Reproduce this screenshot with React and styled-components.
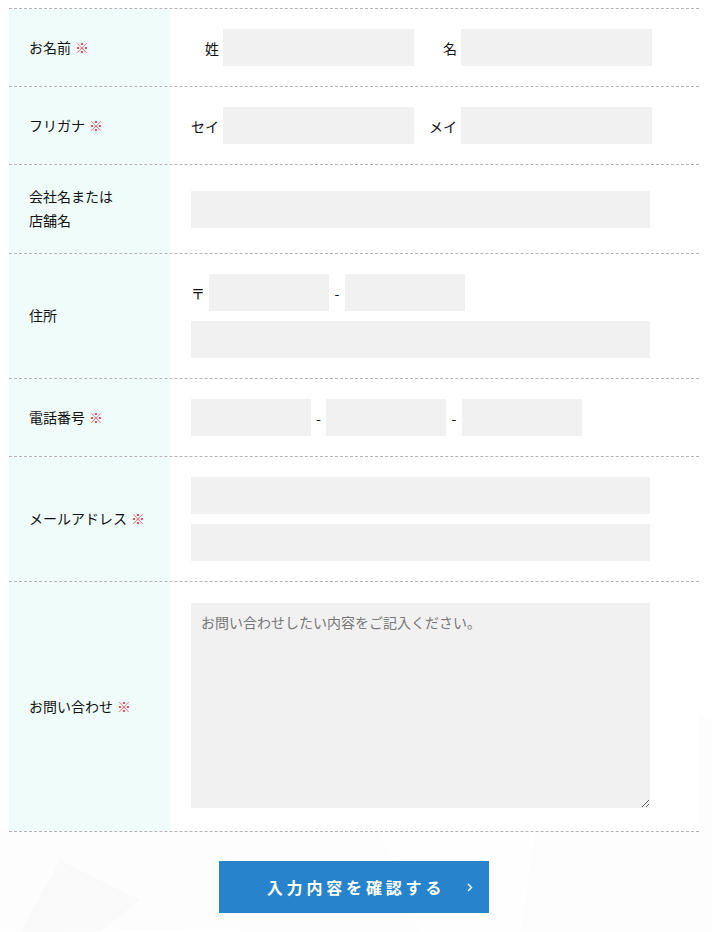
import React from 'react';
import styled, { createGlobalStyle } from 'styled-components';

const GlobalStyle = createGlobalStyle`
    body {
        margin: 0;
        background: #fff;
        font-family: "Noto Sans CJK JP", "Noto Sans", sans-serif;
        color: #111;
    }
    * { box-sizing: border-box; }
`;

const Page = styled.div`
    position: relative;
    width: 712px;
    height: 932px;
    overflow: hidden;
    padding: 8px 13px 0 9px;
`;

const Backdrop = styled.svg`
    position: absolute;
    left: 0;
    top: 0;
    z-index: 0;
    pointer-events: none;
`;

const Form = styled.form`
    position: relative;
    z-index: 1;
`;

const Table = styled.div`
    border-bottom: 1px dashed #b4b4b4;
`;

const Row = styled.div`
    display: grid;
    grid-template-columns: 161px 1fr;
    border-top: 1px dashed #b4b4b4;
`;

const Head = styled.div`
    background: #effcfa;
    display: flex;
    align-items: center;
    padding: 19px 10px 21px 20px;
    font-size: 14px;
    line-height: 24px;
`;

const Required = styled.span`
    color: #d6334b;
    margin-left: 4px;
`;

const Body = styled.div`
    display: flex;
    flex-direction: column;
    justify-content: center;
    gap: 10px;
    padding: ${p => p.$pad || '20px 49px 20px 21px'};
    background: #fff;
`;

const Line = styled.div`
    display: flex;
    align-items: center;
    font-size: 14px;
`;

const SubLabel = styled.span`
    width: 32px;
    padding-right: 4px;
    text-align: right;
    white-space: nowrap;
    font-size: 14px;
`;

const Gap = styled.span`
    width: 15px;
`;

const Mark = styled.span`
    width: 18px;
    font-size: 14px;
`;

const Dash = styled.span`
    width: ${p => p.$w || 15}px;
    text-align: center;
    font-size: 14px;
`;

const Input = styled.input`
    width: ${p => p.$w ? `${p.$w}px` : '100%'};
    height: 37px;
    border: 0;
    background: #f1f1f1;
    padding: 0 10px;
    font-size: 14px;
    font-family: inherit;
    outline: none;
    flex-shrink: 0;
`;

const TextArea = styled.textarea`
    width: 100%;
    height: 205px;
    border: 0;
    background: #f1f1f1;
    padding: 8px 10px;
    font-size: 14px;
    line-height: 22px;
    font-family: inherit;
    outline: none;
    resize: vertical;
    &::placeholder { color: #777; }
`;

const Actions = styled.div`
    display: flex;
    justify-content: center;
    padding-top: 29px;
`;

const Submit = styled.button`
    position: relative;
    width: 270px;
    height: 52px;
    border: 0;
    background: #2783cb;
    color: #fff;
    font-family: inherit;
    font-size: 16px;
    font-weight: 700;
    letter-spacing: 0.24em;
    padding: 0 0 0 4px;
    cursor: pointer;
    svg {
        position: absolute;
        right: 16px;
        top: 22px;
    }
`;

const App = () => {
    return (
        <Page>
            <GlobalStyle />
            <Backdrop width="712" height="932" viewBox="0 0 712 932">
                <g fill="#000">
                    <polygon points="0,830 150,760 240,930 0,932" opacity="0.009" />
                    <polygon points="60,860 140,900 100,932 20,932" opacity="0.01" />
                    <polygon points="150,760 330,700 420,932 240,932" opacity="0.006" />
                    <polygon points="330,700 560,650 520,932 420,932" opacity="0.005" />
                    <polygon points="560,650 712,720 712,932 520,932" opacity="0.007" />
                    <polygon points="0,640 180,650 150,760 0,830" opacity="0.005" />
                </g>
            </Backdrop>
            <Form onSubmit={e => e.preventDefault()}>
                <Table>
                    <Row>
                        <Head>お名前<Required>※</Required></Head>
                        <Body>
                            <Line>
                                <SubLabel>姓</SubLabel>
                                <Input $w={191} />
                                <Gap />
                                <SubLabel>名</SubLabel>
                                <Input $w={191} />
                            </Line>
                        </Body>
                    </Row>
                    <Row>
                        <Head>フリガナ<Required>※</Required></Head>
                        <Body>
                            <Line>
                                <SubLabel>セイ</SubLabel>
                                <Input $w={191} />
                                <Gap />
                                <SubLabel>メイ</SubLabel>
                                <Input $w={191} />
                            </Line>
                        </Body>
                    </Row>
                    <Row>
                        <Head>会社名または<br />店舗名</Head>
                        <Body>
                            <Input />
                        </Body>
                    </Row>
                    <Row>
                        <Head>住所</Head>
                        <Body>
                            <Line>
                                <Mark>〒</Mark>
                                <Input $w={120} />
                                <Dash $w={16}>-</Dash>
                                <Input $w={120} />
                            </Line>
                            <Input />
                        </Body>
                    </Row>
                    <Row>
                        <Head>電話番号<Required>※</Required></Head>
                        <Body>
                            <Line>
                                <Input $w={120} />
                                <Dash>-</Dash>
                                <Input $w={120} />
                                <Dash $w={16}>-</Dash>
                                <Input $w={120} />
                            </Line>
                        </Body>
                    </Row>
                    <Row>
                        <Head>メールアドレス<Required>※</Required></Head>
                        <Body>
                            <Input type="email" />
                            <Input type="email" />
                        </Body>
                    </Row>
                    <Row>
                        <Head>お問い合わせ<Required>※</Required></Head>
                        <Body $pad="21px 49px 23px 21px">
                            <TextArea placeholder="お問い合わせしたい内容をご記入ください。" />
                        </Body>
                    </Row>
                </Table>
                <Actions>
                    <Submit type="submit">
                        入力内容を確認する
                        <svg width="6" height="9" viewBox="0 0 6 9">
                            <polyline points="1,1 4.5,4.5 1,8" fill="none" stroke="#fff" strokeWidth="1.4" />
                        </svg>
                    </Submit>
                </Actions>
            </Form>
        </Page>
    );
};

export default App;
